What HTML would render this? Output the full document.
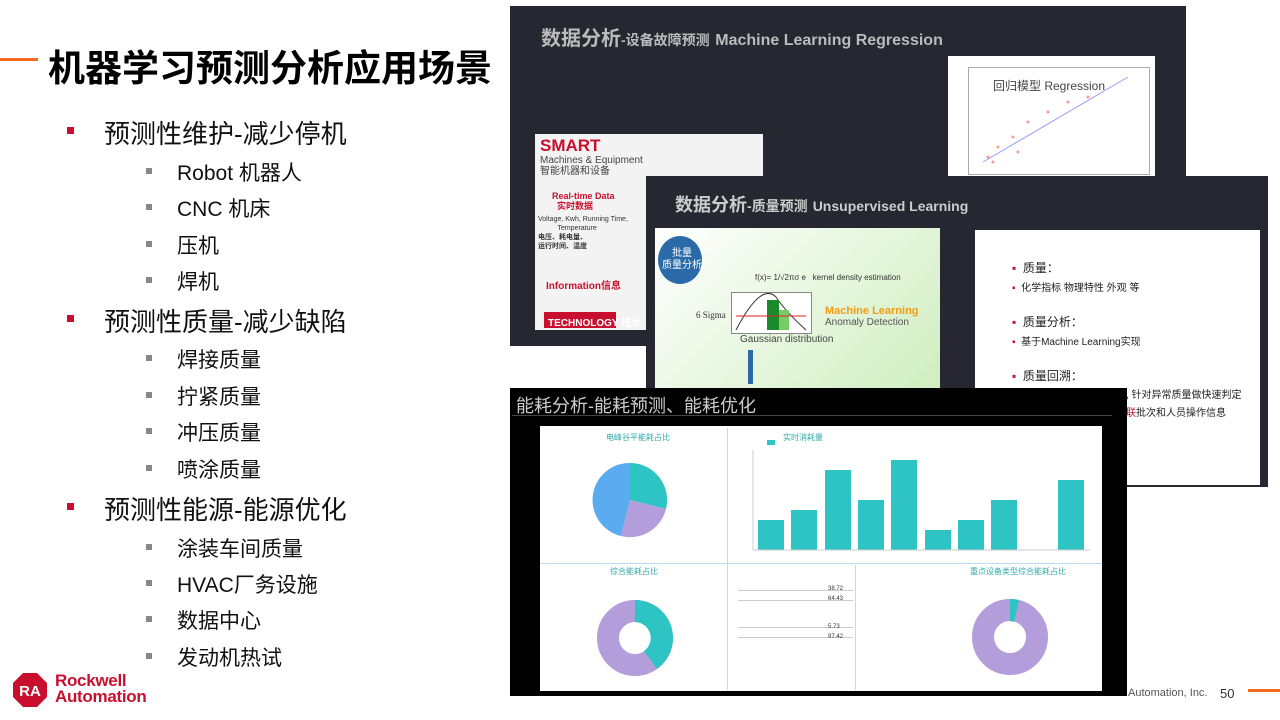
<!DOCTYPE html>
<html><head><meta charset="utf-8"><style>
*{margin:0;padding:0;box-sizing:border-box}
body{width:1280px;height:720px;position:relative;background:#fff;overflow:hidden;font-family:"Liberation Sans","Noto Sans CJK SC",sans-serif}
.a{position:absolute}
.t{position:absolute;white-space:nowrap}
.l1{font-size:26px;color:#111}
.l2{font-size:21px;color:#111}
.b1{position:absolute;width:7px;height:7px;background:#c8102e}
.b2{position:absolute;width:6px;height:6px;background:#888}
</style></head><body>
<div class="a" style="left:0;top:58px;width:38px;height:3px;background:#f26b21"></div>
<div class="t" style="left:48px;top:38px;font-size:37px;font-weight:bold;color:#000">机器学习预测分析应用场景</div>

<div class="b1" style="left:67px;top:127px"></div><div class="t l1" style="left:104px;top:114px">预测性维护-减少停机</div>
<div class="b2" style="left:146px;top:168px"></div><div class="t l2" style="left:177px;top:157px">Robot 机器人</div>
<div class="b2" style="left:146px;top:204px"></div><div class="t l2" style="left:177px;top:193px">CNC 机床</div>
<div class="b2" style="left:146px;top:241px"></div><div class="t l2" style="left:177px;top:230px">压机</div>
<div class="b2" style="left:146px;top:277px"></div><div class="t l2" style="left:177px;top:266px">焊机</div>
<div class="b1" style="left:67px;top:315px"></div><div class="t l1" style="left:104px;top:302px">预测性质量-减少缺陷</div>
<div class="b2" style="left:146px;top:355px"></div><div class="t l2" style="left:177px;top:344px">焊接质量</div>
<div class="b2" style="left:146px;top:392px"></div><div class="t l2" style="left:177px;top:381px">拧紧质量</div>
<div class="b2" style="left:146px;top:428px"></div><div class="t l2" style="left:177px;top:417px">冲压质量</div>
<div class="b2" style="left:146px;top:465px"></div><div class="t l2" style="left:177px;top:454px">喷涂质量</div>
<div class="b1" style="left:67px;top:503px"></div><div class="t l1" style="left:104px;top:490px">预测性能源-能源优化</div>
<div class="b2" style="left:146px;top:544px"></div><div class="t l2" style="left:177px;top:533px">涂装车间质量</div>
<div class="b2" style="left:146px;top:580px"></div><div class="t l2" style="left:177px;top:569px">HVAC厂务设施</div>
<div class="b2" style="left:146px;top:616px"></div><div class="t l2" style="left:177px;top:605px">数据中心</div>
<div class="b2" style="left:146px;top:653px"></div><div class="t l2" style="left:177px;top:642px">发动机热试</div>

<!-- logo -->
<svg class="a" style="left:12px;top:672px" width="36" height="36" viewBox="0 0 36 36"><polygon points="11,1 25,1 35,11 35,25 25,35 11,35 1,25 1,11" fill="#c8102e"/><text x="18" y="24" font-size="15" font-weight="bold" fill="#fff" text-anchor="middle" font-family="Liberation Sans">RA</text></svg>
<div class="t" style="left:55px;top:673px;font-size:17px;font-weight:bold;color:#c8102e;line-height:16px;letter-spacing:-0.3px">Rockwell<br>Automation</div>

<!-- slide 1 -->
<div class="a" style="left:510px;top:6px;width:676px;height:340px;background:#262730"></div>
<div class="t" style="left:541px;top:22px;font-size:20px;font-weight:bold;color:#bbb">数据分析<span style="font-size:14px">-设备故障预测</span> <span style="font-size:16px">Machine Learning Regression</span></div>
<div class="a" style="left:948px;top:56px;width:207px;height:120px;background:#fff"></div>
<div class="a" style="left:968px;top:67px;width:182px;height:108px;border:1px solid #aaa"></div>
<div class="t" style="left:993px;top:77px;font-size:12px;color:#444">回归模型 Regression</div>
<svg class="a" style="left:968px;top:67px" width="182" height="108"><line x1="15" y1="95" x2="160" y2="10" stroke="#99f" stroke-width="1"/><g fill="#f99"><circle cx="20" cy="90" r="1.5"/><circle cx="30" cy="80" r="1.5"/><circle cx="45" cy="70" r="1.5"/><circle cx="60" cy="55" r="1.5"/><circle cx="80" cy="45" r="1.5"/><circle cx="100" cy="35" r="1.5"/><circle cx="25" cy="95" r="1.5"/><circle cx="50" cy="85" r="1.5"/><circle cx="120" cy="30" r="1.5"/></g></svg>
<div class="a" style="left:535px;top:134px;width:228px;height:196px;background:#f3f3f3"></div>
<div class="t" style="left:540px;top:136px;font-size:17px;font-weight:bold;color:#c8102e">SMART</div>
<div class="t" style="left:540px;top:155px;font-size:10px;color:#444;line-height:11px">Machines &amp; Equipment<br>智能机器和设备</div>
<div class="t" style="left:552px;top:191px;font-size:9px;color:#c8102e;font-weight:bold;line-height:10px">Real-time Data<br>&nbsp;&nbsp;实时数据</div>
<div class="t" style="left:538px;top:215px;font-size:7px;color:#333;line-height:9px">Voltage, Kwh, Running Time,<br>&nbsp;&nbsp;&nbsp;&nbsp;&nbsp;&nbsp;&nbsp;&nbsp;&nbsp;&nbsp;Temperature<br><b>电压、耗电量、<br>运行时间、温度</b></div>
<div class="t" style="left:546px;top:277px;font-size:10px;color:#c8102e;font-weight:bold">Information信息</div>
<div class="a" style="left:544px;top:312px;width:72px;height:16px;background:#c8102e"></div>
<div class="t" style="left:548px;top:314px;font-size:10px;color:#fff;font-weight:bold">TECHNOLOGY 技术</div>

<!-- slide 2 -->
<div class="a" style="left:646px;top:176px;width:622px;height:311px;background:#262730"></div>
<div class="t" style="left:675px;top:191px;font-size:18px;font-weight:bold;color:#ccc">数据分析<span style="font-size:14px">-质量预测</span> <span style="font-size:14px">Unsupervised Learning</span></div>
<div class="a" style="left:655px;top:228px;width:285px;height:160px;background:linear-gradient(135deg,#fff,#cfeec0)"></div>
<div class="a" style="left:658px;top:236px;width:44px;height:48px;border-radius:50%;background:#2a6aa8"></div>
<div class="t" style="left:662px;top:248px;font-size:10px;color:#fff;line-height:12px;text-align:center">批量<br>质量分析</div>
<div class="t" style="left:755px;top:273px;font-size:8px;color:#333">f(x)= 1/√2πσ e &nbsp; kernel density estimation</div>
<div class="a" style="left:731px;top:292px;width:81px;height:42px;background:#fff;border:1px solid #888"></div>
<svg class="a" style="left:731px;top:292px" width="81" height="42"><path d="M5 38 Q30 -10 45 5 Q55 20 75 38" fill="none" stroke="#333"/><rect x="36" y="8" width="12" height="30" fill="#1a8a2a"/><rect x="48" y="18" width="10" height="20" fill="#7c6"/><line x1="5" y1="24" x2="75" y2="24" stroke="#d22"/></svg>
<div class="t" style="left:696px;top:310px;font-size:9px;color:#333;font-family:'Liberation Serif'">6 Sigma</div>
<div class="t" style="left:825px;top:305px;font-size:11px;color:#f39c12;font-weight:bold">Machine Learning</div>
<div class="t" style="left:825px;top:317px;font-size:10px;color:#555">Anomaly Detection</div>
<div class="t" style="left:740px;top:334px;font-size:10px;color:#444">Gaussian distribution</div>
<div class="a" style="left:748px;top:350px;width:5px;height:34px;background:#2a6aa8"></div>
<div class="a" style="left:975px;top:230px;width:285px;height:255px;background:#fff"></div>
<div class="t" style="left:1012px;top:259px;font-size:12px;color:#222;line-height:19px"><span style="color:#c8102e">▪</span>&nbsp; 质量：<br><span style="font-size:10px"><span style="color:#c8102e">▪</span>&nbsp; 化学指标 物理特性 外观 等</span></div>
<div class="t" style="left:1012px;top:313px;font-size:12px;color:#222;line-height:19px"><span style="color:#c8102e">▪</span>&nbsp; 质量分析：<br><span style="font-size:10px"><span style="color:#c8102e">▪</span>&nbsp; 基于Machine Learning实现</span></div>
<div class="t" style="left:1012px;top:367px;font-size:12px;color:#222"><span style="color:#c8102e">▪</span>&nbsp; 质量回溯：</div>
<div class="t" style="left:1126px;top:387px;font-size:10px;color:#222;line-height:18px">, 针对异常质量做快速判定<br><span style="color:#c8102e">联</span>批次和人员操作信息</div>

<!-- slide 3 -->
<div class="a" style="left:510px;top:388px;width:617px;height:308px;background:#000"></div>
<div class="t" style="left:516px;top:392px;font-size:18px;color:#ccc">能耗分析-能耗预测、能耗优化</div>
<div class="a" style="left:512px;top:415px;width:600px;height:1px;background:#444"></div>
<div class="a" style="left:540px;top:426px;width:562px;height:265px;background:#fff"></div>
<div class="a" style="left:727px;top:428px;width:1px;height:262px;background:#bde"></div>
<div class="a" style="left:540px;top:563px;width:562px;height:1px;background:#bde"></div>
<div class="a" style="left:855px;top:565px;width:1px;height:125px;background:#bde"></div>
<div class="t" style="left:606px;top:432px;font-size:8px;color:#3aa">电峰谷平能耗占比</div>
<div class="t" style="left:783px;top:432px;font-size:8px;color:#3aa">实时消耗量</div>
<svg class="a" style="left:590px;top:460px" width="80" height="80" viewBox="-40 -40 80 80"><path d="M0 0 L0 -37 A37 37 0 0 1 36 9 Z" fill="#2ec4c4"/><path d="M0 0 L36 9 A37 37 0 0 1 -9 36 Z" fill="#b39ddb"/><path d="M0 0 L-9 36 A37 37 0 0 1 0 -37 Z" fill="#5aabef"/></svg>
<svg class="a" style="left:735px;top:445px" width="360" height="115"><g fill="#2ec4c4"><rect x="23" y="75" width="26" height="30"/><rect x="56" y="65" width="26" height="40"/><rect x="90" y="25" width="26" height="80"/><rect x="123" y="55" width="26" height="50"/><rect x="156" y="15" width="26" height="90"/><rect x="190" y="85" width="26" height="20"/><rect x="223" y="75" width="26" height="30"/><rect x="256" y="55" width="26" height="50"/><rect x="323" y="35" width="26" height="70"/></g><line x1="18" y1="105" x2="355" y2="105" stroke="#ccc"/><line x1="18" y1="5" x2="18" y2="105" stroke="#ccc"/></svg>
<div class="a" style="left:767px;top:440px;width:8px;height:5px;background:#2ec4c4"></div>
<div class="t" style="left:610px;top:566px;font-size:8px;color:#3aa">综合能耗占比</div>
<div class="t" style="left:970px;top:566px;font-size:8px;color:#3aa">重点设备类型综合能耗占比</div>
<svg class="a" style="left:595px;top:598px" width="80" height="80" viewBox="-40 -40 80 80"><circle r="27" fill="none" stroke="#b39ddb" stroke-width="22"/><path d="M0 -38 A38 38 0 0 1 22 31 L9 13 A16 16 0 0 0 0 -16 Z" fill="#2ec4c4"/></svg>
<svg class="a" style="left:970px;top:597px" width="80" height="80" viewBox="-40 -40 80 80"><circle r="27" fill="none" stroke="#b39ddb" stroke-width="22"/><path d="M0 -38 A38 38 0 0 1 9 -37 L4 -15 A16 16 0 0 0 0 -16 Z" fill="#2ec4c4"/></svg>
<div class="a" style="left:738px;top:590px;width:115px;height:1px;background:#ccc"></div>
<div class="a" style="left:738px;top:600px;width:115px;height:1px;background:#ccc"></div>
<div class="a" style="left:738px;top:627px;width:115px;height:1px;background:#ccc"></div>
<div class="a" style="left:738px;top:637px;width:115px;height:1px;background:#ccc"></div>
<div class="t" style="left:828px;top:584px;font-size:6px;color:#333;line-height:10px">38.72<br>64.43</div>
<div class="t" style="left:828px;top:622px;font-size:6px;color:#333;line-height:10px">5.73<br>97.42</div>

<div class="t" style="left:1128px;top:687px;font-size:11px;color:#555">Automation, Inc.</div>
<div class="t" style="left:1220px;top:686px;font-size:13px;color:#333">50</div>
<div class="a" style="left:1248px;top:689px;width:32px;height:3px;background:#f26b21"></div>
</body></html>
